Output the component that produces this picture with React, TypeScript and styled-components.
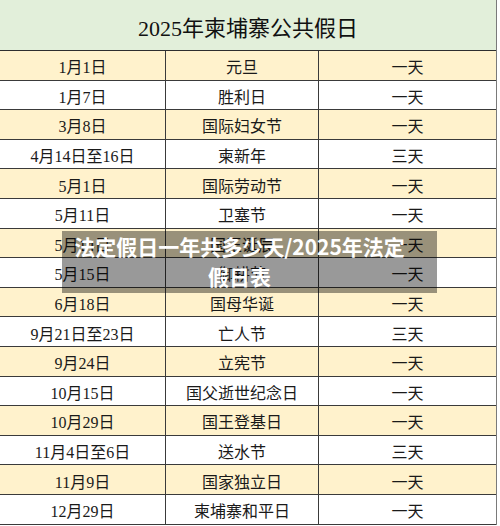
import styled, { createGlobalStyle } from "styled-components";

const GlobalStyle = createGlobalStyle`
  html, body {
    margin: 0;
    padding: 0;
    background: #ffffff;
  }
  body {
    font-family: "Liberation Serif", "Noto Sans CJK SC", serif;
  }
`;

interface Holiday {
  date: string;
  name: string;
  days: string;
}

const holidays: Holiday[] = [
  { date: "1月1日", name: "元旦", days: "一天" },
  { date: "1月7日", name: "胜利日", days: "一天" },
  { date: "3月8日", name: "国际妇女节", days: "一天" },
  { date: "4月14日至16日", name: "柬新年", days: "三天" },
  { date: "5月1日", name: "国际劳动节", days: "一天" },
  { date: "5月11日", name: "卫塞节", days: "一天" },
  { date: "5月14日", name: "国王诞辰", days: "一天" },
  { date: "5月15日", name: "御耕节", days: "一天" },
  { date: "6月18日", name: "国母华诞", days: "一天" },
  { date: "9月21日至23日", name: "亡人节", days: "三天" },
  { date: "9月24日", name: "立宪节", days: "一天" },
  { date: "10月15日", name: "国父逝世纪念日", days: "一天" },
  { date: "10月29日", name: "国王登基日", days: "一天" },
  { date: "11月4日至6日", name: "送水节", days: "三天" },
  { date: "11月9日", name: "国家独立日", days: "一天" },
  { date: "12月29日", name: "柬埔寨和平日", days: "一天" },
];

export default function App() {
  return (
    <>
      <GlobalStyle />
      <Page>
        <Table>
          <TitleRow>2025年柬埔寨公共假日</TitleRow>
          {holidays.map((h, i) => (
            <Row key={h.date} $striped={i % 2 === 0}>
              <Cell>{h.date}</Cell>
              <Cell>{h.name}</Cell>
              <Cell $last>{h.days}</Cell>
            </Row>
          ))}
        </Table>
        <Caption>
          法定假日一年共多少天/2025年法定
          <br />
          假日表
        </Caption>
      </Page>
    </>
  );
}

const Page = styled.div`
  position: relative;
  width: 500px;
  height: 526px;
  overflow: hidden;
  background: #ffffff;
`;

const Table = styled.div`
  width: 497px;
  border-right: 1px solid #7a7a7a;
  box-sizing: border-box;
  color: #1a1a1a;
`;

const TitleRow = styled.div`
  height: 51px;
  display: flex;
  align-items: center;
  justify-content: center;
  padding-top: 2px;
  box-sizing: border-box;
  background: #e2efda;
  border-bottom: 1px solid #2e2e2e;
  font-size: 22px;
  color: #111111;
`;

const Row = styled.div<{ $striped: boolean }>`
  display: grid;
  grid-template-columns: 166px 153px 1fr;
  height: 29.6px;
  box-sizing: border-box;
  background: ${({ $striped }) => ($striped ? "#fff2cc" : "#ffffff")};
  border-bottom: 1px solid #3a3a3a;
`;

const Cell = styled.div<{ $last?: boolean }>`
  display: flex;
  align-items: center;
  justify-content: center;
  padding-top: 2px;
  font-size: 16px;
  border-right: ${({ $last }) => ($last ? "none" : "1px solid #3a3a3a")};
  white-space: nowrap;
`;

const Caption = styled.div`
  position: absolute;
  left: 62px;
  top: 231px;
  width: 375px;
  height: 62px;
  box-sizing: border-box;
  padding: 0 30px 0 10px;
  background: rgba(0, 0, 0, 0.4);
  color: #ffffff;
  font-family: "Noto Sans CJK SC", "Noto Sans", sans-serif;
  font-weight: 700;
  font-size: 21px;
  line-height: 30px;
  text-align: center;
  white-space: nowrap;
`;
